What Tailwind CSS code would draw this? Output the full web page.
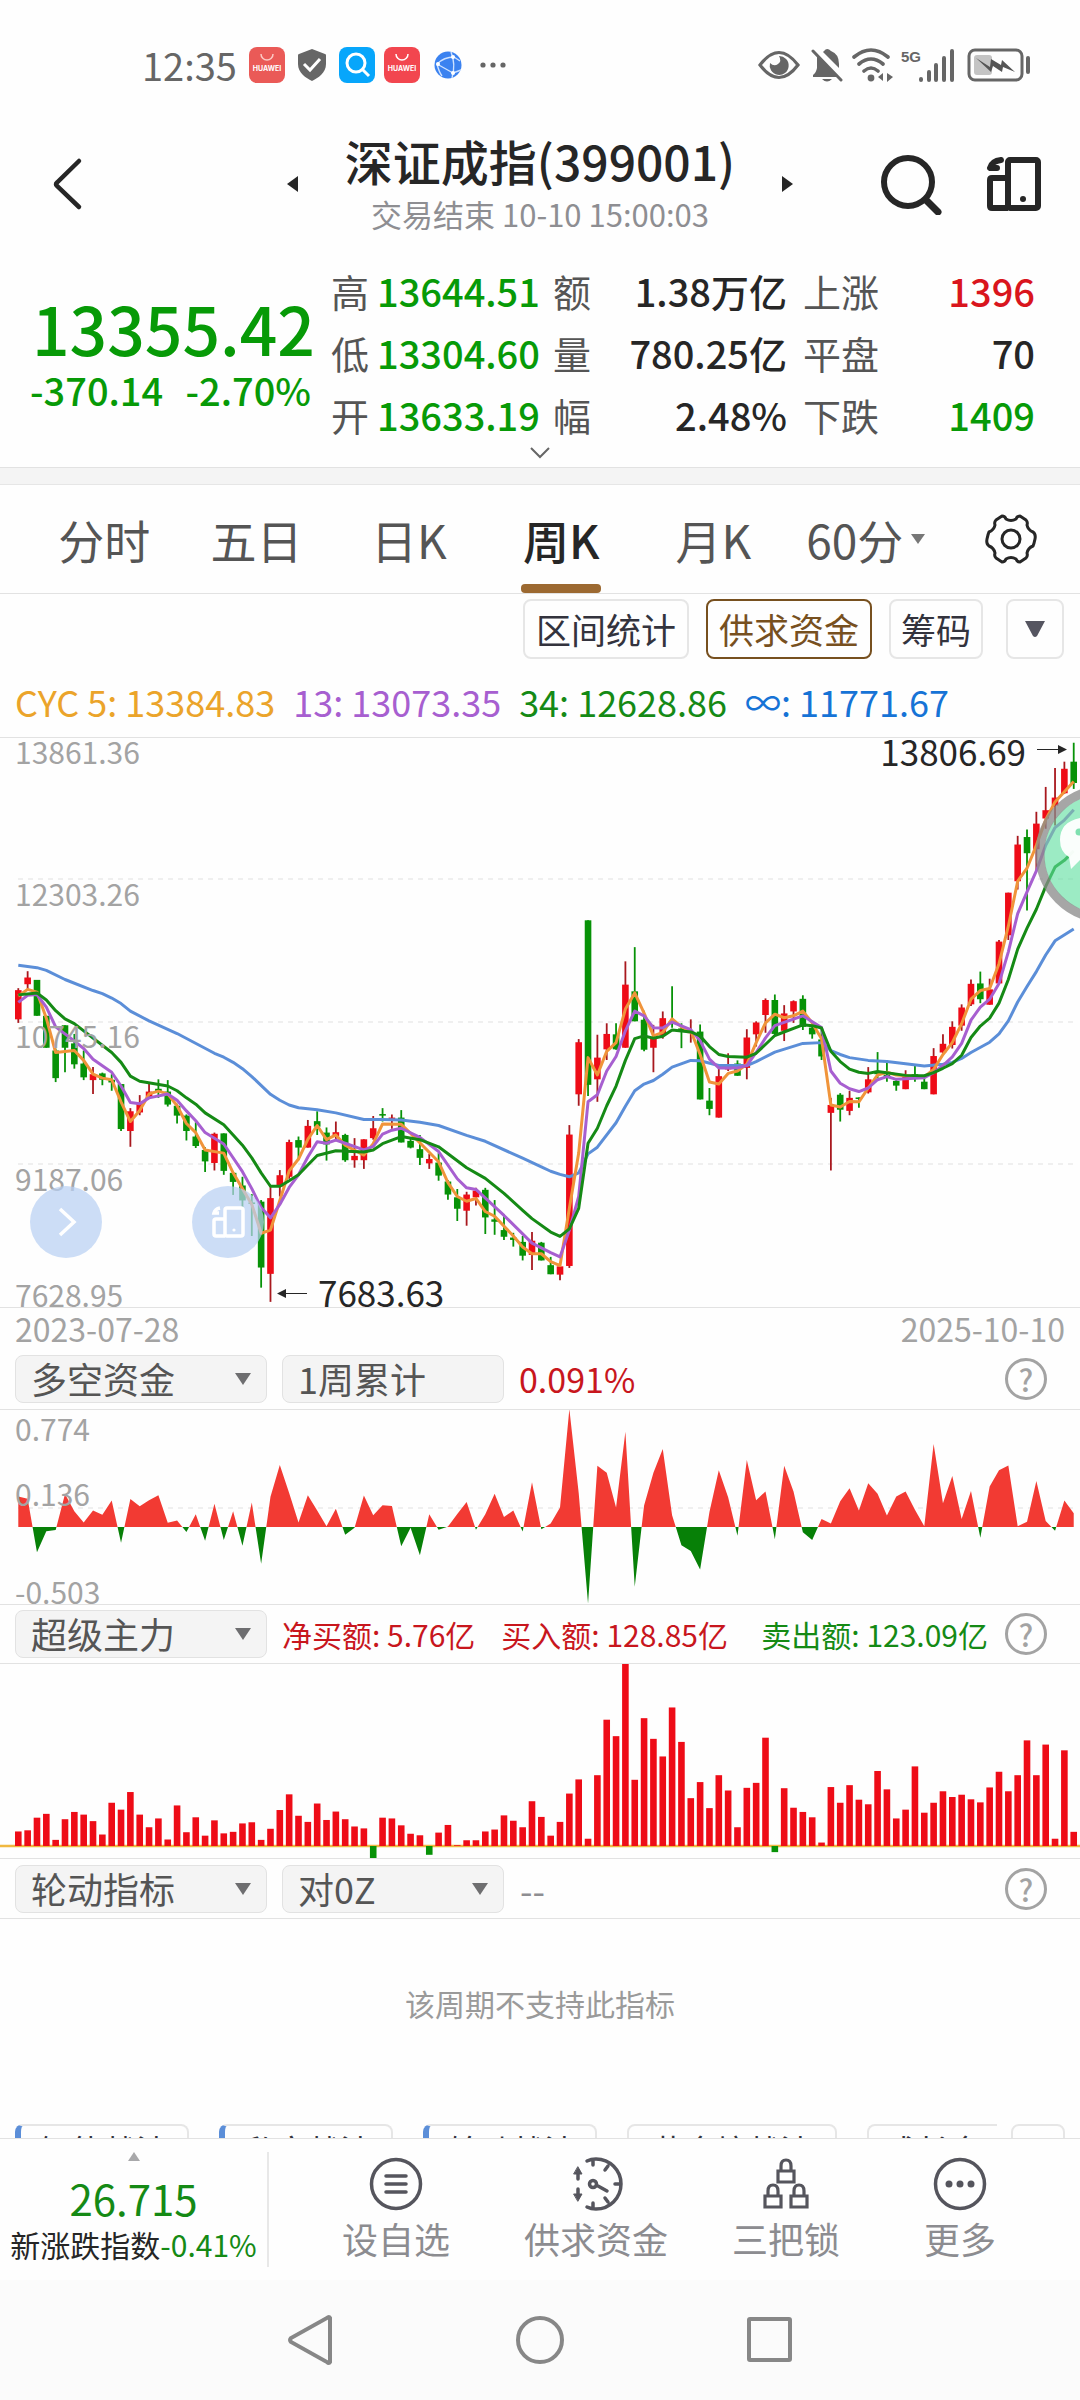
<!DOCTYPE html>
<html lang="zh-CN">
  <head>
    <meta charset="UTF-8" />
    <meta name="viewport" content="width=device-width, initial-scale=1.0" />
    <title>深证成指(399001)</title>
    <script src="https://cdn.jsdelivr.net/npm/@tailwindcss/browser@4"></script>
  </head>
  <body class="bg-[#fefefe] font-['Noto_Sans_CJK_SC',sans-serif] text-[#262626] overflow-x-hidden">
    <!-- status bar -->
    <div class="flex items-center h-[130px] pl-[142px] pr-[49px] text-[#666]">
      <span class="text-[38px] leading-[44px] mr-3">12:35</span>
      <svg class="w-9 h-9 mr-3" viewBox="0 0 36 36">
        <rect width="36" height="36" rx="8" fill="#ea5a57" />
        <path d="M12 7a6 6 0 0 0 12 0" fill="none" stroke="#fbc9c4" stroke-width="1.5" />
        <text x="18" y="24" font-size="7" font-weight="700" fill="#fff" text-anchor="middle" font-family="Inter, sans-serif">HUAWEI</text>
      </svg>
      <svg class="w-[30px] h-9 mr-3" viewBox="0 0 30 36">
        <path d="M15 2 28 7c1 0 1 1 1 2v8c0 9-8 14-14 17C9 31 1 26 1 17V9c0-1 0-2 1-2z" fill="#666" />
        <path d="m7 17 6 6 10-11" fill="none" stroke="#fff" stroke-width="3" />
      </svg>
      <svg class="w-9 h-9 mr-[9px]" viewBox="0 0 36 36">
        <rect width="36" height="36" rx="8" fill="#07a6fb" />
        <circle cx="17" cy="16" r="9" fill="none" stroke="#fff" stroke-width="3" />
        <path d="m23 22 7 7" stroke="#fff" stroke-width="3" />
      </svg>
      <svg class="w-9 h-9 mr-[14px]" viewBox="0 0 36 36">
        <rect width="36" height="36" rx="8" fill="#f2464f" />
        <path d="M12 7a6 6 0 0 0 12 0" fill="none" stroke="#fff" stroke-width="1.5" />
        <text x="18" y="24" font-size="7" font-weight="700" fill="#fff" text-anchor="middle" font-family="Inter, sans-serif">HUAWEI</text>
      </svg>
      <svg class="w-7 h-7 mr-[18px]" viewBox="0 0 28 28">
        <circle cx="14" cy="14" r="13.5" fill="#3b82f0" />
        <path d="M3 13 19 22M3 13Q10 6 20 6M17 1q5 12 1 26M3 13q2 8 5 12M19 22l8-3M20 6l6 4" fill="none" stroke="#cfe2ff" stroke-width="1.4" />
        <circle cx="4" cy="13" r="2" fill="#fff" /><circle cx="19" cy="6" r="2" fill="#fff" /><circle cx="19" cy="22" r="2" fill="#fff" />
      </svg>
      <svg class="w-[26px] h-2" viewBox="0 0 26 8" fill="#666">
        <circle cx="3" cy="4" r="2.6" /><circle cx="13" cy="4" r="2.6" /><circle cx="23" cy="4" r="2.6" />
      </svg>
      <svg class="w-[42px] h-9 ml-auto mr-[11px]" viewBox="0 0 42 36">
        <path d="M2 18Q21-7 40 18 21 43 2 18z" fill="none" stroke="#666" stroke-width="3.2" />
        <path d="M21 9a9.500 9.500 0 1 1-9 7q4 4 8 1t1-8z" fill="#666" />
      </svg>
      <svg class="w-8 h-9 mr-2" viewBox="0 0 32 36">
        <path d="M13 4q3-4 7 0 8 3 8 13v4L12 5zM6 9l20 21H2v-2q3-2 4-7zM11 32h10q-5 5-10 0z" fill="#666" />
        <path d="m2 4 28 29" stroke="#666" stroke-width="3" stroke-linecap="round" />
      </svg>
      <svg class="w-[42px] h-9 mr-2" viewBox="0 0 42 36" fill="none" stroke="#666" stroke-width="3.6" stroke-linecap="round">
        <path d="M3 10q17-14 34 0M8 17q12-10 24 0M13 24q7-6 14 0" />
        <circle cx="20" cy="31" r="3.400" fill="#666" stroke="none" />
        <path d="m27 30 5-4v8zM42 30l-6-4v9z" fill="#666" stroke="none" />
      </svg>
      <svg class="w-[54px] h-9 mr-3" viewBox="0 0 54 36">
        <text x="0" y="15" font-size="15" font-weight="700" fill="#666" font-family="'Liberation Sans Narrow', 'Liberation Sans', sans-serif">5G</text>
        <path d="M20 32v1M28 25v8M35 18v15M43 11v22M51 4v29" stroke="#666" stroke-width="4" stroke-linecap="round" />
      </svg>
      <svg class="w-16 h-9" viewBox="0 0 64 36">
        <rect x="2" y="3" width="53" height="30" rx="6" fill="none" stroke="#666" stroke-width="3" />
        <rect x="7" y="8" width="18" height="20" rx="3" fill="#c4c4c4" />
        <path d="m9 11 14 9 1-8 10 6 1-5 13 12-12-5-1 5-9-6-2 6z" fill="#555" />
        <path d="M61 11v14" stroke="#666" stroke-width="4" stroke-linecap="round" />
      </svg>
    </div>

    <!-- title bar -->
    <header class="grid grid-cols-[1fr_auto_1fr] items-center h-[120px] px-[38px] pb-[14px]">
      <button aria-label="返回" class="w-9 ml-[11px]">
        <svg class="w-9 h-[54px]" viewBox="0 0 36 54"><path d="M30 4 8 25.500Q6 27 8 29L30 50" fill="none" stroke="#262626" stroke-width="4.500" stroke-linecap="round" /></svg>
      </button>
      <div class="flex items-center justify-center">
        <button aria-label="上一只"><svg class="w-3 h-4" viewBox="0 0 12 16"><path d="M11 0v16L0 8z" fill="#262626" /></svg></button>
        <div class="w-[482px] text-center">
          <h1 class="text-[48px] leading-[60px] font-medium">深证成指(399001)</h1>
          <p class="text-[31px] leading-[48px] text-[#8e8e92]">交易结束 10-10 15:00:03</p>
        </div>
        <button aria-label="下一只"><svg class="w-3 h-4" viewBox="0 0 12 16"><path d="M1 0v16l11-8z" fill="#262626" /></svg></button>
      </div>
      <div class="flex items-center justify-end gap-[42px]">
        <button aria-label="搜索">
          <svg class="w-16 h-[62px]" viewBox="0 0 64 62" fill="none" stroke="#262626"><circle cx="28" cy="29" r="24" stroke-width="6" /><path d="m46 47 12 12" stroke-width="7" stroke-linecap="round" /></svg>
        </button>
        <button aria-label="横屏">
          <svg class="w-14 h-[54px]" viewBox="0 0 56 54" fill="none" stroke="#262626" stroke-width="6">
            <rect x="22" y="3" width="30" height="48" rx="2" /><path d="M22 21H6q-2 0-2 2v26q0 2 2 2h16" /><path d="M15 3Q6 4 4 11h7" stroke-linecap="round" stroke-linejoin="round" />
            <circle cx="37" cy="42" r="3" fill="#262626" stroke="none" />
          </svg>
        </button>
      </div>
    </header>

    <!-- quote -->
    <section class="relative flex h-[218px] pt-[10px] pr-[45px] border-b border-[#e2e2e2]">
      <div class="w-[331px] pt-[26px] text-[#079a07]">
        <p class="text-[66px] leading-[82px] font-medium text-right pr-[16px]">13355.42</p>
        <p class="flex justify-between text-[38px] leading-[44px] font-medium pl-[30px] pr-[20px]"><span>-370.14</span><span>-2.70%</span></p>
      </div>
      <dl class="flex-1 grid grid-cols-[46px_160px_16px_40px_194px_16px_80px_1fr] auto-rows-[62px] items-center text-[38px] leading-[62px] font-medium [&>dt]:text-[#555] [&>dt]:font-normal [&>dd]:text-right">
        <dt>高</dt><dd class="text-[#079a07]">13644.51</dd><i></i><dt>额</dt><dd>1.38万亿</dd><i></i><dt>上涨</dt><dd class="text-[#d9151d]">1396</dd>
        <dt>低</dt><dd class="text-[#079a07]">13304.60</dd><i></i><dt>量</dt><dd>780.25亿</dd><i></i><dt>平盘</dt><dd>70</dd>
        <dt>开</dt><dd class="text-[#079a07]">13633.19</dd><i></i><dt>幅</dt><dd>2.48%</dd><i></i><dt>下跌</dt><dd class="text-[#079a07]">1409</dd>
      </dl>
      <svg class="absolute left-1/2 bottom-2 -ml-[10px] w-5 h-3" viewBox="0 0 20 12"><path d="m1 1 9 9 9-9" fill="none" stroke="#666" stroke-width="2" /></svg>
    </section>
    <div class="h-[17px] bg-[#f4f4f4] border-b border-[#e6e6e6]"></div>

    <!-- period tabs -->
    <nav class="flex items-stretch h-[109px] pl-[28px] border-b border-[#e2e2e2] text-[46px] leading-[104px] text-[#555]">
      <button class="flex-1">分时</button>
      <button class="flex-1">五日</button>
      <button class="flex-1">日K</button>
      <button class="flex-1 relative font-medium text-[#262626]">周K<span class="absolute left-1/2 -ml-10 bottom-0 w-20 h-[9px] rounded bg-[#9c6931]"></span></button>
      <button class="flex-1">月K</button>
      <button class="flex-1 flex items-center justify-center gap-2">60分<svg class="w-[14px] h-[10px]" viewBox="0 0 14 10"><path d="M0 0h14L7 10z" fill="#777" /></svg></button>
      <button class="w-[138px] flex items-center justify-center" aria-label="设置">
        <svg class="w-[52px] h-[52px]" viewBox="0 0 52 52" fill="none" stroke="#262626" stroke-width="3" stroke-linejoin="round">
          <path d="M17 3q3 0 4 3 5 3 10 0 1-3 4-3l6 4q2 2 1 5 1 5 6 7 3 2 2 7t-2 7q-5 2-6 7 1 3-1 5l-6 4q-3 0-4-3-5-3-10 0-1 3-4 3l-6-4q-2-2-1-5-1-5-6-7-3-2-2-7t2-7q5-2 6-7-1-3 1-5z" />
          <circle cx="26" cy="26" r="9" />
        </svg>
      </button>
    </nav>

    <div class="flex justify-end items-center h-[70px] pr-4 gap-[17px] text-[35px] text-[#33333d]">
      <button class="w-[166px] h-[60px] border-2 border-[#e6e6e6] rounded-lg leading-[54px]">区间统计</button>
      <button class="w-[166px] h-[60px] border-2 border-[#77501f] rounded-lg leading-[54px] text-[#77501f]">供求资金</button>
      <button class="w-[94px] h-[60px] border-2 border-[#e6e6e6] rounded-lg leading-[54px]">筹码</button>
      <button class="w-[58px] h-[60px] ml-[6px] border-2 border-[#e6e6e6] rounded-lg flex items-center justify-center" aria-label="更多指标"><svg class="w-5 h-4" viewBox="0 0 20 16"><path d="M0 0h20L12 15q-2 2-4 0z" fill="#555560" /></svg></button>
    </div>

    <div class="flex items-center h-[73px] pl-[15px] gap-[18px] text-[36px] leading-[60px] whitespace-nowrap">
      <span class="text-[#eba42a]">CYC 5: 13384.83</span>
      <span class="text-[#a75fd0]">13: 13073.35</span>
      <span class="text-[#158a15]">34: 12628.86</span>
      <span class="text-[#1673d6]">∞: 11771.67</span>
    </div>

    <!-- weekly candles -->
    <section class="relative border-y border-[#e2e2e2]">
      <svg id="kline" class="block w-full" viewBox="0 0 1080 569">
        <g stroke="#efefef" stroke-width="2" stroke-dasharray="5 5"><path d="M18 141H1073M18 284H1073M18 426H1073" /></g>
        <g id="candles"></g>
        <g id="averages" fill="none" stroke-width="3" stroke-linejoin="round"></g>
        <g font-size="30" fill="#a3a3a3">
          <text x="15" y="26">13861.36</text><text x="15" y="168">12303.26</text><text x="15" y="310">10745.16</text><text x="15" y="453">9187.06</text><text x="15" y="569">7628.95</text>
        </g>
        <g font-size="35" fill="#262626">
          <text x="1026" y="28" text-anchor="end">13806.69</text><text x="318" y="569">7683.63</text>
        </g>
        <g fill="#262626"><path d="M1037 11h21V7l9 4.500-9 4.500v-4h-21zM307 555h-21v-4l-9 4.500 9 4.500v-4h21z" /></g>
        <g fill="#b9d0f2" fill-opacity=".72"><circle cx="66" cy="484" r="36" /><circle cx="228" cy="484" r="36" /></g>
        <path d="m60 471 14 13-14 13" fill="none" stroke="#fff" stroke-width="3.500" />
        <g fill="none" stroke="#fff" stroke-width="3.500">
          <rect x="225" y="470" width="18" height="28" rx="2" /><path d="M225 481h-9q-2 0-2 2v13q0 2 2 2h9" /><path d="M220 470q-5 1-6 5h5" />
          <circle cx="234" cy="492" r="1.600" fill="#fff" stroke="none" />
        </g>
        <!-- floating service bubble, half off the edge -->
        <circle cx="1104" cy="116" r="60" fill="#5fdf9f" fill-opacity=".62" />
        <circle cx="1104" cy="116" r="64" fill="none" stroke="#8a8a8a" stroke-opacity=".76" stroke-width="9" />
        <path d="M1080 80q-20 4-20 22 0 12 9 17l2 12 9-9z" fill="#fff" fill-opacity=".95" />
        <circle cx="1079" cy="94" r="3.500" fill="#7fe0b0" />
      </svg>
    </section>
    <div class="flex justify-between items-center h-[44px] px-[15px] text-[32px] leading-[40px] pb-1 text-[#a3a3a3]"><span>2023-07-28</span><span>2025-10-10</span></div>

    <!-- 多空资金 -->
    <div class="flex items-center h-[57px] pb-[3px] pl-[15px] pr-[33px] text-[36px] text-[#555]">
      <div class="relative w-[252px] h-12 mr-[15px]">
        <select aria-label="指标一" class="block appearance-none w-full h-12 pl-[15px] pb-[2px] leading-[42px] bg-[#f4f4f4] border border-[#e2e2e2] rounded-lg"><option>多空资金</option></select>
        <svg class="absolute right-4 top-[18px] w-4 h-3 pointer-events-none" viewBox="0 0 16 12"><path d="M0 0h16L8 12z" fill="#6e6e70" /></svg>
      </div>
      <button class="w-[222px] h-12 pl-[15px] pb-[2px] leading-[42px] text-left bg-[#f4f4f4] border border-[#e2e2e2] rounded-lg">1周累计</button>
      <span class="ml-[15px] text-[34px] leading-[48px] text-[#c8161d]">0.091%</span>
      <button class="ml-auto w-[42px] h-[42px] rounded-full border-3 border-[#a3a3a3] text-[#a3a3a3] text-[30px] leading-[34px] font-medium" aria-label="多空资金说明">?</button>
    </div>
    <section class="border-y border-[#e2e2e2]">
      <svg class="block w-full" viewBox="0 0 1080 194">
        <path d="M18 98H1073" stroke="#efefef" stroke-width="2" stroke-dasharray="5 5" />
        <clipPath id="above"><rect width="1080" height="117" /></clipPath>
        <clipPath id="below"><rect y="117" width="1080" height="77" /></clipPath>
        <path id="flowUp" clip-path="url(#above)" fill="#f23a33" />
        <path id="flowDown" clip-path="url(#below)" fill="#078007" />
        <g font-size="30" fill="#a3a3a3"><text x="15" y="31">0.774</text><text x="15" y="96">0.136</text><text x="15" y="194">-0.503</text></g>
      </svg>
    </section>

    <!-- 超级主力 -->
    <div class="flex items-center h-[58px] pl-[15px] pr-[33px] text-[36px] text-[#555]">
      <div class="relative w-[252px] h-12 mr-[15px]">
        <select aria-label="指标二" class="block appearance-none w-full h-12 pl-[15px] pb-[2px] leading-[42px] bg-[#f4f4f4] border border-[#e2e2e2] rounded-lg"><option>超级主力</option></select>
        <svg class="absolute right-4 top-[18px] w-4 h-3 pointer-events-none" viewBox="0 0 16 12"><path d="M0 0h16L8 12z" fill="#6e6e70" /></svg>
      </div>
      <p class="flex-1 flex pr-[17px] text-[30px] leading-[44px] text-[#c8161d] whitespace-nowrap"><span class="mr-[26px]">净买额: 5.76亿</span><span>买入额: 128.85亿</span><span class="ml-auto text-[#158a15]">卖出额: 123.09亿</span></p>
      <button class="w-[42px] h-[42px] rounded-full border-3 border-[#a3a3a3] text-[#a3a3a3] text-[30px] leading-[34px] font-medium" aria-label="超级主力说明">?</button>
    </div>
    <section class="border-y border-[#e2e2e2]">
      <svg class="block w-full" viewBox="0 0 1080 194">
        <path d="M0 182H1080" stroke="#f0b840" stroke-width="2.500" />
        <g id="bars"></g>
      </svg>
    </section>

    <!-- 轮动指标 -->
    <div class="flex items-center h-[60px] pl-[15px] pr-[33px] text-[36px] text-[#555] border-b border-[#e2e2e2]">
      <div class="relative w-[252px] h-12 mr-[15px]">
        <select aria-label="指标三" class="block appearance-none w-full h-12 pl-[15px] pb-[2px] leading-[42px] bg-[#f4f4f4] border border-[#e2e2e2] rounded-lg"><option>轮动指标</option></select>
        <svg class="absolute right-4 top-[18px] w-4 h-3 pointer-events-none" viewBox="0 0 16 12"><path d="M0 0h16L8 12z" fill="#6e6e70" /></svg>
      </div>
      <div class="relative w-[222px] h-12">
        <select aria-label="对比标的" class="block appearance-none w-full h-12 pl-[15px] pb-[2px] leading-[42px] bg-[#f4f4f4] border border-[#e2e2e2] rounded-lg"><option>对0Z</option></select>
        <svg class="absolute right-4 top-[18px] w-4 h-3 pointer-events-none" viewBox="0 0 16 12"><path d="M0 0h16L8 12z" fill="#6e6e70" /></svg>
      </div>
      <span class="ml-[16px] text-[#8e8e92]">--</span>
      <button class="ml-auto w-[42px] h-[42px] rounded-full border-3 border-[#a3a3a3] text-[#a3a3a3] text-[30px] leading-[34px] font-medium" aria-label="轮动指标说明">?</button>
    </div>
    <p class="h-[205px] pt-[62px] text-center text-[30px] leading-[44px] text-[#9a9a9a]">该周期不支持此指标</p>

    <!-- strategy chips, cut off by the bottom bar -->
    <div class="flex h-[14px] overflow-hidden pl-[15px] pr-[15px] text-[32px] leading-[44px] text-[#33333d] whitespace-nowrap">
      <button class="shrink-0 w-[174px] h-[50px] mr-[30px] border-2 border-l-6 border-[#e6e6e6] border-l-[#5b8ed8] rounded-lg">智能战法</button>
      <button class="shrink-0 w-[174px] h-[50px] mr-[30px] border-2 border-l-6 border-[#e6e6e6] border-l-[#5b8ed8] rounded-lg">私家战法</button>
      <button class="shrink-0 w-[174px] h-[50px] mr-[30px] border-2 border-l-6 border-[#e6e6e6] border-l-[#5b8ed8] rounded-lg">轮动战法</button>
      <button class="shrink-0 w-[210px] h-[50px] mr-[30px] border-2 border-[#e6e6e6] rounded-lg">黄金坑战法</button>
      <button class="shrink-0 w-[130px] h-[50px] border-2 border-r-0 border-[#e6e6e6] rounded-l-lg">成长金</button>
      <button class="shrink-0 w-[54px] h-[50px] ml-auto border-2 border-[#e6e6e6] rounded-lg" aria-label="更多战法"></button>
    </div>

    <!-- bottom bar -->
    <footer class="flex items-center h-[142px] bg-[#fefefe] border-t border-[#e2e2e2]">
      <a href="#" class="block w-[269px] h-[115px] border-r-2 border-[#e8e8e8] text-center">
        <svg class="block mx-auto w-3 h-[9px]" viewBox="0 0 12 9"><path d="M6 0 12 9H0z" fill="#a8a8aa" /></svg>
        <span class="block mt-[11px] text-[42px] leading-[52px] text-[#158a15]">26.715</span>
        <span class="block text-[30px] leading-[40px] whitespace-nowrap">新涨跌指数<span class="text-[#158a15]">-0.41%</span></span>
      </a>
      <div class="flex-1 grid grid-cols-[200fr_200fr_180fr_168fr] pl-[27px] pr-[36px] pt-[3px] text-[36px] leading-[54px] text-[#8c8c90] [&_svg]:mx-auto [&_svg]:w-[54px] [&_svg]:h-[54px]">
        <button>
          <svg viewBox="0 0 54 54" fill="none" stroke="#55555d" stroke-width="3.500" stroke-linecap="round"><circle cx="27" cy="27" r="24.500" /><path d="M17 19h20M17 27h20M17 35h20" /></svg>
          设自选
        </button>
        <button>
          <svg viewBox="0 0 54 54" fill="none" stroke="#55555d" stroke-width="3.500" stroke-linecap="round">
            <path d="M18 4q4-2 9-2a25 25 0 0 1 0 50q-5 0-9-2M24 3v5M39 9l-3 4M51 27h-5M39 45l-3-4M24 51v-5M29 29l9 5" /><circle cx="24" cy="27" r="3.500" />
            <path d="M9 14v8M9 32v8" /><path d="m9 10 4 7H5zM9 44l4-7H5z" fill="#55555d" stroke-width="1" />
          </svg>
          供求资金
        </button>
        <button>
          <svg viewBox="0 0 54 54" fill="none" stroke="#55555d" stroke-width="3.200">
            <path d="M19 14h16v11H19zM22 14V9q0-6 5-6t5 6v5M6 39h16v11H6zM9 39v-5q0-6 5-6t5 6v5M32 39h16v11H32zM35 39v-5q0-6 5-6t5 6v5" />
          </svg>
          三把锁
        </button>
        <button>
          <svg viewBox="0 0 54 54" fill="none" stroke="#55555d" stroke-width="3.500"><circle cx="27" cy="27" r="24.500" /><g fill="#55555d" stroke="none"><circle cx="16" cy="27" r="3.500" /><circle cx="27" cy="27" r="3.500" /><circle cx="38" cy="27" r="3.500" /></g></svg>
          更多
        </button>
      </div>
    </footer>

    <!-- system navigation -->
    <div class="flex items-center justify-center gap-[182px] h-[120px] bg-[#fbfbfb]">
      <button aria-label="后退"><svg class="block w-12 h-[52px]" viewBox="0 0 48 52"><path d="M44 4v44Q43 50 41 48L5 28q-2-2 0-4L41 4q2-2 3 0z" fill="none" stroke="#878787" stroke-width="4" /></svg></button>
      <button aria-label="主屏幕"><svg class="block w-12 h-[52px]" viewBox="0 0 48 52"><circle cx="24" cy="26" r="22" fill="none" stroke="#878787" stroke-width="4" /></svg></button>
      <button aria-label="最近任务"><svg class="block w-12 h-[52px]" viewBox="0 0 48 52"><rect x="3" y="5" width="41" height="41" rx="1" fill="none" stroke="#878787" stroke-width="4" /></svg></button>
    </div>

    <script>
      const RED = "#ee0c17";
      const GREEN = "#079207";
      const xAt = (i) => 18.3 + i * 9.34;

      // one week per entry: colour, body top, body bottom, high, low
      const candles = `r657,731,652,740 r625,642,609,655 g631,722,631,722 g722,803,722,803 g810,880,805,890 g746,803,746,865 g792,845,768,856 g843,878,810,885
        r870,885,852,920 g868,884,866,898 g884,891,870,912 g895,1009,895,1014 r964,1014,956,1054 r944,967,923,974 r914,930,890,932 g907,914,883,930
        g914,947,885,952 g950,975,945,995 g975,1014,972,1038 g1028,1052,992,1057 g1062,1091,1055,1118 r1021,1095,1018,1114 g1020,1115,1020,1125 g1120,1143,1118,1176
        g1152,1190,1130,1209 g1195,1199,1174,1280 g1193,1360,1189,1411 r1184,1376,1155,1447 r1126,1155,1113,1180 r1042,1130,1036,1135 g1037,1056,1028,1088 r1001,1056,986,1056
        g989,1003,964,1024 g1018,1048,1005,1089 r1017,1028,990,1040 g1024,1088,1021,1092 r1077,1088,1032,1107 r1035,1088,1035,1110 r1007,1032,976,1036 g971,975,956,990
        r980,984,972,1008 g980,1043,961,1043 g1039,1056,1030,1058 g1060,1082,1024,1100 r1085,1096,1072,1110 g1094,1127,1070,1140 g1142,1175,1138,1188 g1182,1211,1161,1242
        r1175,1216,1168,1254 r1165,1182,1158,1203 g1163,1233,1158,1275 g1238,1244,1189,1277 g1265,1282,1225,1290 g1284,1290,1272,1307 g1295,1330,1280,1342 r1292,1328,1270,1366
        g1297,1342,1295,1342 g1354,1377,1333,1377 r1357,1378,1350,1392 r1023,1356,999,1361 r789,921,781,950 g480,897,480,925 r828,883,770,940 r768,807,741,834
        g769,807,741,808 r643,803,584,803 g660,736,548,736 g732,808,709,812 r780,803,745,865 r728,772,711,780 g735,739,647,752 g754,758,741,804
        r762,766,731,790 g762,934,744,934 g937,958,905,974 r875,980,855,980 r852,858,817,862 g843,874,835,874 r777,854,756,883 r739,769,736,800
        r682,720,678,765 g682,768,668,772 r716,760,695,786 r685,711,683,740 g679,750,670,758 g752,769,745,780 g782,825,750,834 r948,968,930,1114
        g922,960,918,990 r930,963,912,974 g929,933,929,955 r883,916,852,919 g866,870,814,880 g871,878,835,889 g887,899,880,912 r873,908,860,908
        g870,878,845,889 g889,908,873,908 r824,921,804,921 r793,815,769,820 r750,796,736,805 r701,747,693,760 r641,693,630,697 g640,680,610,690
        r655,694,628,694 r534,640,530,640 r410,518,410,530 r288,381,266,402 g269,310,250,455 r235,300,205,355 r201,222,142,248 r169,189,94,240
        r96,158,78,160 g78,132,30,147`.split(/\s+/);
      const priceY = (v) => ((v - 18) * 569) / 1442;

      document.getElementById("candles").innerHTML = candles
        .map((c, i) => {
          const color = c[0] === "r" ? RED : GREEN;
          const wick = c[0] === "r" ? "#a8181e" : GREEN;
          const [top, bottom, high, low] = c.slice(1).split(",").map((v) => priceY(+v));
          const x = xAt(i);
          return `<path d="M${x} ${high}V${low}" stroke="${wick}" stroke-width="1.800"/><rect x="${x - 3.3}" y="${top}" width="6.600" height="${Math.max(bottom - top, 1.5)}" fill="${color}"/>`;
        })
        .join("");

      // turning points of the cost lines: week,value
      const averages = {
        "#5b8ed8": "0,594 2,600 3,607 5,630 8,658 9,666 10,677 11,691 12,710 14,735 17,767 21,817 22,827 23,840 24,856 25,876 27,921 28,936 29,948 30,955 32,960 34,968 37,985 39,985 41,986 43,992 45,1000 48,1025 50,1040 54,1083 56,1105 57,1116 58,1124 59,1130 60,1120 61,1072 62,1055 64,993 65,951 66,912 67,895 68,886 69,870 70,852 72,835 73,836 75,848 78,848 79,838 81,814 84,792 86,790 87,810 88,820 89,828 91,835 93,838 97,849 99,845 100,840 101,830 102,815 104,789 105,768 106,735 107,687 108,648 109,610 110,568 111,532 113,502",
        "#f0943a": "0,672 1,655 2,662 3,728 4,815 6,810 7,835 8,870 9,880 10,884 11,940 12,990 13,962 14,920 15,913 16,920 17,950 18,995 19,1018 20,1062 22,1070 23,1120 24,1160 25,1200 26,1273 27,1265 28,1190 29,1115 30,1085 31,1035 32,1000 33,1036 34,1024 35,1050 37,1075 38,1046 39,996 41,997 42,1020 45,1092 46,1145 47,1180 48,1192 49,1185 50,1218 51,1230 53,1280 54,1308 55,1325 56,1325 57,1345 58,1355 59,1210 60,1070 61,828 62,872 63,812 64,790 65,705 66,664 67,715 68,773 69,764 70,730 71,750 72,760 73,820 74,890 75,895 76,868 77,862 78,845 79,790 80,740 81,718 82,727 83,722 84,710 85,740 86,780 87,948 88,953 89,939 90,940 91,905 92,872 93,865 94,872 97,877 98,858 99,820 100,790 101,742 102,680 103,658 104,653 105,590 106,495 107,381 108,348 109,290 110,225 111,180 113,128",
        "#a75fd0": "0,688 1,670 2,668 3,700 4,750 6,786 7,805 8,832 10,865 11,900 12,942 13,945 14,930 16,920 17,936 18,963 19,988 20,1018 22,1047 24,1117 25,1160 26,1208 27,1234 28,1200 29,1157 30,1125 31,1080 32,1041 33,1045 34,1037 35,1045 37,1062 38,1053 39,1022 40,1012 41,1007 43,1030 45,1066 47,1135 48,1158 49,1162 52,1228 55,1298 57,1322 58,1333 59,1265 60,1180 61,940 62,922 63,862 64,825 65,760 66,710 67,722 68,752 69,753 70,738 72,757 73,785 74,832 75,854 77,854 78,848 79,815 80,778 81,747 84,722 86,752 87,862 88,893 89,907 90,914 91,905 92,884 93,876 94,883 96,880 97,879 98,866 99,848 100,826 101,792 102,733 103,700 104,680 105,640 106,560 107,463 108,408 109,355 110,290 111,245 112,226 113,200",
        "#158a15": "0,669 2,664 3,682 4,709 5,730 6,742 10,815 11,840 12,875 13,888 16,900 17,912 18,930 19,946 20,968 22,998 24,1050 25,1082 26,1120 27,1154 28,1154 29,1140 30,1125 31,1100 32,1076 34,1064 37,1067 38,1062 39,1046 41,1028 43,1036 45,1054 48,1107 50,1134 52,1172 54,1215 55,1236 57,1270 58,1281 59,1262 60,1210 61,1045 62,1007 63,950 64,900 65,835 66,780 67,773 68,779 69,774 70,758 72,763 73,773 74,800 75,820 76,825 78,827 79,817 81,772 84,745 85,747 86,753 87,812 88,838 89,857 90,865 91,868 92,863 95,873 97,874 98,866 99,855 100,843 101,822 102,777 103,748 104,728 105,690 106,630 107,553 108,500 109,452 110,394 111,345 112,328 113,304",
      };
      document.getElementById("averages").innerHTML = Object.entries(averages)
        .map(([color, line]) => {
          const points = line.split(" ").map((p) => {
            const [i, v] = p.split(",");
            return `${xAt(+i)},${priceY(+v)}`;
          });
          return `<polyline stroke="${color}" points="${points.join(" ")}"/>`;
        })
        .join("");

      // net long/short money per week
      const flow = [80,74,-66,-11,-8,86,41,12,43,32,69,-41,73,54,70,83,11,17,-13,33,-36,61,-34,41,-49,64,-96,79,162,89,12,83,43,2,48,-20,-2,82,31,57,55,-50,-2,-74,33,-7,1,34,65,-7,33,87,26,43,-12,117,-6,9,51,308,89,-200,160,142,51,249,-156,56,142,204,31,-48,-63,-111,39,148,78,-23,175,70,93,-32,160,93,-14,-34,21,9,67,101,43,114,87,30,80,93,45,2,217,62,133,21,94,-28,106,148,161,2,14,120,16,-10,69,36];
      const outline = `M${xAt(0)} 117` + flow.map((v, i) => `L${xAt(i)} ${117 - v / 2.613}`).join("") + `L${xAt(113)} 117Z`;
      document.getElementById("flowUp").setAttribute("d", outline);
      document.getElementById("flowDown").setAttribute("d", outline);

      // main force volume
      const volume = [38,41,74,84,16,70,89,82,65,30,113,95,141,82,49,72,17,106,36,75,27,67,33,37,59,62,16,45,94,135,79,63,111,68,90,70,51,46,-32,74,72,54,32,28,-23,35,55,2,15,15,38,43,80,66,49,117,76,27,63,137,174,19,185,330,287,476,173,334,280,234,362,272,125,167,99,185,145,49,152,165,283,-16,151,100,89,75,9,154,113,159,121,109,196,148,72,95,208,87,113,143,128,134,122,114,153,194,143,185,276,185,265,19,250,37];
      document.getElementById("bars").innerHTML = volume
        .map((v, i) => {
          const h = Math.abs(v) / 2.613;
          return `<rect x="${xAt(i) - 3.3}" y="${v > 0 ? 182 - h : 182}" width="6.600" height="${h}" fill="${v > 0 ? RED : GREEN}"/>`;
        })
        .join("");
    </script>
  </body>
</html>
